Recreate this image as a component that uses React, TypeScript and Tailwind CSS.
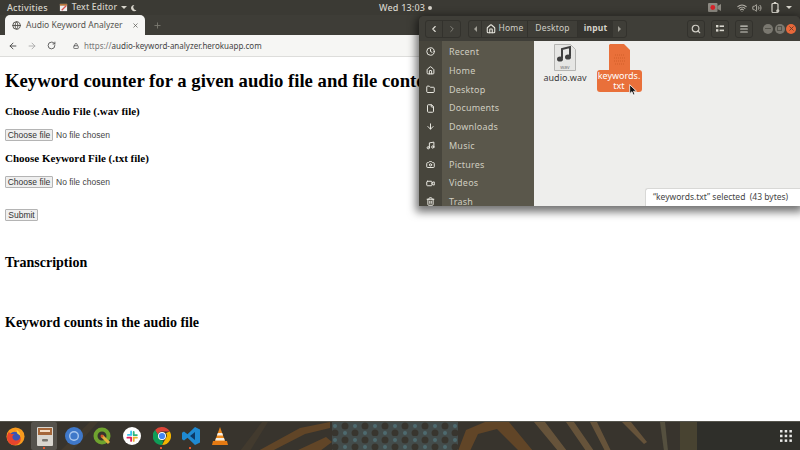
import { ChevronLeft, ChevronRight, Search, Menu, ArrowLeft, ArrowRight, RotateCw, Lock, X, Plus, Globe, Home, Clock, Folder, File, ArrowDown, Music, Camera, Video, Trash2, Wifi, Volume2 } from 'lucide-react';

const ui = "font-['Noto_Sans',sans-serif]";
const serif = "font-['Liberation_Serif',serif]";
const arial = "font-['Liberation_Sans',sans-serif]";

const places = [
    { label: 'Recent', icon: Clock },
    { label: 'Home', icon: Home },
    { label: 'Desktop', icon: Folder },
    { label: 'Documents', icon: File },
    { label: 'Downloads', icon: ArrowDown },
    { label: 'Music', icon: Music },
    { label: 'Pictures', icon: Camera },
    { label: 'Videos', icon: Video },
    { label: 'Trash', icon: Trash2 },
];

function FileButton() {
    return (
        <div className={`flex items-center h-[12px] ${arial}`}>
            <button className="h-[12px] w-[48px] bg-[#efefef] border border-[#b4b4b4] rounded-[1px] text-[8.5px] leading-none text-[#333]">Choose file</button>
            <span className="ml-[3px] text-[8.5px] text-[#444]">No file chosen</span>
        </div>
    );
}

function TopBar() {
    return (
        <div className={`h-[15px] bg-[#3b3a34] text-[#d6d3ca] text-[9px] flex items-center relative ${ui}`}>
            <span className="ml-[7px] font-medium tracking-[0.2px]">Activities</span>
            <svg className="ml-[11px]" width="9" height="9" viewBox="0 0 10 10">
                <rect x="1" y="1" width="8" height="8" fill="#eee" />
                <rect x="1" y="1" width="8" height="2" fill="#b5763c" />
                <path d="M3 8 8 3" stroke="#d9534f" strokeWidth="1.4" />
            </svg>
            <span className="ml-[4px] font-medium text-[8.5px] tracking-[0.2px]">Text Editor</span>
            <div className="ml-[4px] w-0 h-0 border-x-[3px] border-x-transparent border-t-[3px] border-t-[#d6d3ca]" />
            <svg className="ml-[3px]" width="7" height="8" viewBox="0 0 8 8">
                <path d="M5 .5a3.600 3.600 0 1 0 2.500 6A3.400 3.400 0 0 1 5 .5Z" fill="#d6d3ca" />
            </svg>
            <div className="absolute left-[379px] top-0 h-[15px] flex items-center gap-[3px]">
                <span className="font-medium tracking-[0.2px]">Wed 13:03</span>
                <div className="w-[4px] h-[4px] rounded-full bg-[#d6d3ca]" />
            </div>
            <div className="ml-auto flex items-center mr-[8px]">
                <svg width="13" height="9" viewBox="0 0 13 9">
                    <rect x="0" y="0" width="9.500" height="9" rx="1" fill="#8d8a82" />
                    <circle cx="4.800" cy="4.500" r="2.400" fill="#d8232a" />
                    <path d="M9.500 3 13 1v7L9.500 6Z" fill="#8d8a82" />
                </svg>
                <Wifi className="ml-[16px] text-[#b5b2a9]" size={10} strokeWidth={2.6} />
                <Volume2 className="ml-[5px] text-[#b5b2a9]" size={10} strokeWidth={2.4} />
                <svg className="ml-[9px]" width="9" height="11" viewBox="0 0 9 11">
                    <rect x="1" y="1.500" width="6" height="9" rx="1" fill="none" stroke="#d6d3ca" strokeWidth="1.200" />
                    <rect x="2.800" y="0" width="2.400" height="1.500" fill="#d6d3ca" />
                    <circle cx="6.800" cy="8.800" r="1.600" fill="#d6d3ca" />
                </svg>
                <div className="ml-[6px] w-0 h-0 border-x-[3px] border-x-transparent border-t-[3px] border-t-[#d6d3ca]" />
            </div>
        </div>
    );
}

function BrowserChrome() {
    return (
        <>
            <div className={`h-[20px] bg-[#3e3d37] flex items-end pl-[5px] ${ui}`}>
                <div className="w-[140px] h-[20px] bg-[#f6f6f4] rounded-t-[5px] flex items-center pl-[7px] pr-[6px] text-[#55544f]">
                    <Globe size={9} strokeWidth={2.6} className="text-[#55544f]" />
                    <span className="ml-[5px] text-[8.5px]">Audio Keyword Analyzer</span>
                    <X className="ml-auto" size={7} strokeWidth={2.4} />
                </div>
                <Plus className="ml-[8px] mb-[5px] text-[#7a7970]" size={9} strokeWidth={2.4} />
            </div>
            <div className={`h-[22px] bg-[#f6f6f4] border-b border-[#dddddb] flex items-center pl-[8px] ${ui}`}>
                <ArrowLeft size={10} strokeWidth={2.2} className="text-[#444]" />
                <ArrowRight size={10} strokeWidth={2.2} className="ml-[9px] text-[#aaa]" />
                <RotateCw size={9} strokeWidth={2.4} className="ml-[10px] text-[#555]" />
                <Lock size={6} strokeWidth={3} className="ml-[17px] text-[#555]" />
                <span className="ml-[5px] text-[8px] text-[#444]">
                    <span className="text-[#777]">https://</span>audio-keyword-analyzer.herokuapp.com
                </span>
            </div>
        </>
    );
}

function PageBody() {
    return (
        <div className={`flex-1 bg-white pl-[5px] text-black overflow-hidden ${serif}`}>
            <h1 className="mt-[12px] h-[24px] text-[18.72px] leading-[24px] font-bold whitespace-nowrap">Keyword counter for a given audio file and file contents</h1>
            <h3 className="mt-[11px] h-[14px] text-[11px] leading-[14px] font-bold">Choose Audio File (.wav file)</h3>
            <div className="mt-[11px]"><FileButton /></div>
            <h3 className="mt-[10px] h-[14px] text-[11px] leading-[14px] font-bold">Choose Keyword File (.txt file)</h3>
            <div className="mt-[11px]"><FileButton /></div>
            <button className={`block mt-[21px] h-[12px] w-[33px] bg-[#efefef] border border-[#b4b4b4] rounded-[1px] text-[8.5px] leading-none text-[#333] ${arial}`}>Submit</button>
            <h2 className="mt-[33px] h-[18px] text-[14px] leading-[18px] font-bold">Transcription</h2>
            <h2 className="mt-[42px] h-[18px] text-[14px] leading-[18px] font-bold">Keyword counts in the audio file</h2>
        </div>
    );
}

function FileWindow() {
    return (
        <div className={`absolute left-[419px] top-[16px] w-[381px] h-[190px] flex flex-col rounded-t-[5px] overflow-hidden shadow-[0_3px_8px_3px_rgba(0,0,0,0.55)] ${ui}`}>
            <div className="h-[25px] bg-[#3f3e38] flex items-center text-[#d0cec6] text-[8.5px] tracking-[0.2px]">
                <div className="ml-[6px] h-[18px] w-[36px] flex border border-[#33322d] rounded-[3px]">
                    <div className="w-[17px] flex items-center justify-center border-r border-[#33322d] text-[#e0ded6]"><ChevronLeft size={10} strokeWidth={2.6} /></div>
                    <div className="flex-1 flex items-center justify-center text-[#85837b]"><ChevronRight size={10} strokeWidth={2.4} /></div>
                </div>
                <div className="ml-[7px] h-[18px] flex border border-[#33322d] rounded-[3px]">
                    <div className="w-[13px] flex items-center justify-center border-r border-[#33322d]">
                        <div className="w-0 h-0 border-y-[3px] border-y-transparent border-r-[3px] border-r-[#a09e95]" />
                    </div>
                    <div className="w-[46px] flex items-center justify-center gap-[3px] border-r border-[#33322d]"><Home size={10} strokeWidth={2.6} className="text-[#e8e6de]" /><span>Home</span></div>
                    <div className="w-[50px] flex items-center justify-center border-r border-[#33322d]">Desktop</div>
                    <div className="w-[35px] flex items-center justify-center bg-[#35342f] font-bold text-[#d5d3cb]">input</div>
                    <div className="w-[13px] flex items-center justify-center">
                        <div className="w-0 h-0 border-y-[3px] border-y-transparent border-l-[3px] border-l-[#a09e95]" />
                    </div>
                </div>
                <div className="ml-[60px] h-[18px] w-[18px] flex items-center justify-center border border-[#33322d] rounded-[3px]"><Search size={10} strokeWidth={2.8} /></div>
                <div className="ml-[6px] h-[18px] w-[18px] flex items-center justify-center border border-[#33322d] rounded-[3px]">
                    <svg width="8" height="7" viewBox="0 0 8 7" fill="#d8d6ce">
                        <rect x="0" y="0" width="2.400" height="2.400" />
                        <rect x="3.600" y="0.400" width="4.400" height="1.600" />
                        <rect x="0" y="4.200" width="2.400" height="2.400" />
                        <rect x="3.600" y="4.600" width="4.400" height="1.600" />
                    </svg>
                </div>
                <div className="ml-[6px] h-[18px] w-[18px] flex items-center justify-center border border-[#33322d] rounded-[3px]"><Menu size={10} strokeWidth={2.6} /></div>
                <div className="ml-[10px] flex gap-[1.5px]">
                    <div className="w-[10px] h-[10px] rounded-full bg-[#7a7870] flex items-center justify-center"><div className="w-[6px] h-[1px] bg-[#55544c]" /></div>
                    <div className="w-[10px] h-[10px] rounded-full bg-[#7a7870] flex items-center justify-center"><div className="w-[5px] h-[5px] border border-[#55544c]" /></div>
                    <div className="w-[10px] h-[10px] rounded-full bg-[#e9683a] flex items-center justify-center"><X size={7} strokeWidth={3} className="text-[#5a3a2c]" /></div>
                </div>
            </div>
            <div className="flex-1 flex min-h-0">
                <div className="w-[115px] bg-[#5a574b] flex overflow-hidden">
                    <div className="w-[23px] bg-[#47453c] shrink-0" />
                    <div className="flex-1 relative">
                        <div className="-ml-[23px] pt-[1.5px]">
                            {places.map(({ label, icon: Icon }) => (
                                <div key={label} className="h-[18.75px] flex items-center text-[#cfcdc0] text-[9px] tracking-[0.2px]">
                                    <Icon size={9} strokeWidth={2.6} className="ml-[7px] text-[#ecebe4]" />
                                    <span className="ml-[14px]">{label}</span>
                                </div>
                            ))}
                        </div>
                    </div>
                </div>
                <div className="flex-1 bg-[#eeeeec] relative flex items-start pl-[10px] pt-[3px]">
                    <div className="w-[42px] flex flex-col items-center">
                        <svg width="22" height="27" viewBox="0 0 22 27">
                            <path d="M.5.5h16l5 5v21H.5Z" fill="#e6e6e4" stroke="#b5b5b3" />
                            <path d="M8 14V5l8-2v9" fill="none" stroke="#3f3f3f" strokeWidth="2" />
                            <ellipse cx="6" cy="15" rx="3" ry="2.600" fill="#3f3f3f" />
                            <ellipse cx="14" cy="13" rx="3" ry="2.600" fill="#3f3f3f" />
                            <text x="11" y="24.500" textAnchor="middle" fontSize="5" fill="#777" fontFamily="Noto Sans, sans-serif">wav</text>
                        </svg>
                        <span className="text-[#3c3c3c] text-[9px] leading-[11px] mt-[1px]">audio.wav</span>
                    </div>
                    <div className="ml-[10px] flex flex-col items-center w-[46px]">
                        <svg width="21" height="27" viewBox="0 0 21 27" className="-mb-[1px]">
                            <path d="M1 0h14l6 6v21H0V1Z" fill="#e9703a" />
                            <path d="M6 11h9M5 14h11M5 17h11M6 20h9" stroke="#d9642f" strokeWidth="1.500" strokeDasharray="1 1" />
                        </svg>
                        <div className="w-[45px] h-[22px] bg-[#e9703a] rounded-[3px] text-white text-[9px] leading-[10px] text-center pt-[1px]">keywords.<br />txt</div>
                    </div>
                    <svg className="absolute left-[95px] top-[43px]" width="8" height="12" viewBox="0 0 8 12">
                        <path d="M.7.7v9l2.200-2 1.500 3.400 1.600-.7-1.500-3.200h3Z" fill="#111" stroke="#fff" strokeWidth="0.800" />
                    </svg>
                    <div className="absolute right-0 bottom-0 w-[155px] h-[18px] bg-white rounded-tl-[3px] border-l border-t border-[#d8d8d6] flex items-center pl-[7px] text-[8.5px] text-[#444]">“keywords.txt” selected&nbsp;&nbsp;(43 bytes)</div>
                </div>
            </div>
        </div>
    );
}

function Wallpaper() {
    return (
        <svg className="absolute left-0 top-0" width="697" height="29" viewBox="0 0 697 29">
            <defs>
                <pattern id="lattice" width="20" height="14" patternUnits="userSpaceOnUse">
                    <rect width="20" height="14" fill="#434c4b" />
                    <circle cx="5" cy="4" r="3.500" fill="#38352e" />
                    <circle cx="15" cy="11" r="3.500" fill="#38352e" />
                    <circle cx="15" cy="4" r="2" fill="#4d6a6f" />
                    <circle cx="5" cy="11" r="2" fill="#4d6a6f" />
                </pattern>
            </defs>
            <rect width="697" height="29" fill="#38342d" />
            <path d="M60 29 90 0h8L72 29Z M240 29 262 0h6L250 29Z" fill="#423a2e" />
            <path d="M258 29 300 6 330 0v6L305 12 272 29Z M296 29l30-14 6 5-12 9Z" fill="#614527" />
            <rect x="332" width="126" height="29" fill="url(#lattice)" />
            <path d="M458 29 466 8 485 0h24l24 29h-14L497 7 478 12 470 29Z" fill="#614527" />
            <path d="M534 0l24 29h9L545 0Z M566 0l20 29h8L574 0Z M590 0l15 29h6L597 0Z M622 0l22 22 3-2L631 0Z" fill="#66533a" />
            <path d="M660 0l4 29h4L665 0Z" fill="#55503f" />
            <rect x="680" width="17" height="29" fill="#484331" />
        </svg>
    );
}

function Dock() {
    return (
        <div className="h-[29px] bg-[#2f2f2a] relative flex items-center border-t border-[#55544c] overflow-hidden">
            <Wallpaper />
            <div className="relative flex items-center h-full">
                <div className="absolute left-[31px] top-0 w-[26px] h-full bg-white/15 rounded-[2px]" />
                <div className="absolute left-[43px] bottom-[1px] w-[2px] h-[2px] bg-[#e9572b]" />
                <div className="absolute left-[160px] bottom-[1px] w-[2px] h-[2px] bg-[#e9572b]" />
                <div className="absolute left-[189px] bottom-[1px] w-[2px] h-[2px] bg-[#e9572b]" />
                <div className="w-[30px] flex justify-center">
                    <svg width="19" height="19" viewBox="0 0 20 20">
                        <circle cx="10" cy="10" r="9.500" fill="#f89a1e" />
                        <circle cx="9" cy="11" r="6" fill="#3a55b5" />
                        <path d="M3 5c2 3 4 2 6 3-3 1-3 4 0 6 3 1 6-1 6-4 2 5-2 9-6 9-5 0-8-4-8-8 0-2 1-4 2-6Z" fill="#e8452c" />
                        <path d="M11 3c2 1 4 3 4 6l-3-2Z" fill="#ffcf3a" />
                    </svg>
                </div>
                <div className="w-[29px] flex justify-center relative">
                    <svg width="18" height="19" viewBox="0 0 18 19">
                        <rect x="1" y="0" width="16" height="19" rx="1" fill="#d9d6cf" />
                        <rect x="2" y="1" width="14" height="7" fill="#a5673a" />
                        <rect x="4" y="3" width="10" height="2" fill="#f3dcc4" />
                        <rect x="6" y="12" width="6" height="2.500" rx="1" fill="#77756e" />
                    </svg>
                </div>
                <div className="w-[29px] flex justify-center">
                    <svg width="18" height="18" viewBox="0 0 18 18">
                        <circle cx="9" cy="9" r="9" fill="#3f78c9" />
                        <circle cx="9" cy="9" r="5" fill="#a9c7ee" />
                        <circle cx="9" cy="9" r="3.600" fill="#3f78c9" />
                    </svg>
                </div>
                <div className="w-[29px] flex justify-center">
                    <svg width="19" height="19" viewBox="0 0 19 19">
                        <circle cx="9" cy="9" r="6.500" fill="none" stroke="#6fa32f" strokeWidth="4" />
                        <path d="M9 9l7 7" stroke="#e2b13c" strokeWidth="3" />
                        <circle cx="9" cy="9" r="1.500" fill="#d8552a" />
                    </svg>
                </div>
                <div className="w-[30px] flex justify-center">
                    <svg width="18" height="18" viewBox="0 0 18 18">
                        <circle cx="9" cy="9" r="9" fill="#fff" />
                        <rect x="4" y="7" width="5" height="1.800" rx=".9" fill="#36c5f0" />
                        <rect x="7.200" y="3.500" width="1.800" height="5" rx=".9" fill="#36c5f0" />
                        <rect x="9.800" y="4" width="1.800" height="5" rx=".9" fill="#2eb67d" />
                        <rect x="9.800" y="7.200" width="5" height="1.800" rx=".9" fill="#2eb67d" />
                        <rect x="9.800" y="9.800" width="5" height="1.800" rx=".9" fill="#ecb22e" />
                        <rect x="9.800" y="9.800" width="1.800" height="5" rx=".9" fill="#ecb22e" />
                        <rect x="3.500" y="9.800" width="5" height="1.800" rx=".9" fill="#e01e5a" />
                        <rect x="7.200" y="9.800" width="1.800" height="5" rx=".9" fill="#e01e5a" />
                    </svg>
                </div>
                <div className="w-[29px] flex justify-center">
                    <svg width="18" height="18" viewBox="0 0 36 36">
                        <path d="M18 0a18 18 0 0 1 15.600 9H18a9 9 0 0 0-8.500 6L4.200 5.800A18 18 0 0 1 18 0Z" fill="#db4437" />
                        <path d="M33.600 9A18 18 0 0 1 18 36l7.800-13.500A9 9 0 0 0 26 12Z" fill="#f4b400" />
                        <path d="M18 36A18 18 0 0 1 4.200 5.800L12 19a9 9 0 0 0 9 8Z" fill="#0f9d58" />
                        <circle cx="18" cy="18" r="8" fill="#fff" />
                        <circle cx="18" cy="18" r="6.200" fill="#4285f4" />
                    </svg>
                </div>
                <div className="w-[29px] flex justify-center">
                    <svg width="18" height="18" viewBox="0 0 18 18">
                        <path d="M13 0 18 2.500v13L13 18 5.500 10.800 2 13.500 0 12.300V5.700L2 4.500l3.500 2.700Z" fill="#1f8ad2" />
                        <path d="M13 5 8 9l5 4Z" fill="#0d3a66" />
                    </svg>
                </div>
                <div className="w-[29px] flex justify-center">
                    <svg width="16" height="19" viewBox="0 0 16 19">
                        <path d="M8 0 13 14H3Z" fill="#f08a1d" />
                        <path d="M5.800 6h4.400l.9 2.500H4.900ZM4 11h8l.8 2.500H3.200Z" fill="#f5f1e8" />
                        <path d="M1 14h14l1 4H0Z" fill="#e57a12" />
                    </svg>
                </div>
            </div>
            <svg className="absolute left-[780px] top-[8px]" width="12" height="12" viewBox="0 0 12 12" fill="#e8e8e6">
                <rect x="0" y="0" width="2.500" height="2.500" /><rect x="4.700" y="0" width="2.500" height="2.500" /><rect x="9.400" y="0" width="2.500" height="2.500" />
                <rect x="0" y="4.700" width="2.500" height="2.500" /><rect x="4.700" y="4.700" width="2.500" height="2.500" /><rect x="9.400" y="4.700" width="2.500" height="2.500" />
                <rect x="0" y="9.400" width="2.500" height="2.500" /><rect x="4.700" y="9.400" width="2.500" height="2.500" /><rect x="9.400" y="9.400" width="2.500" height="2.500" />
            </svg>
        </div>
    );
}

export default function App() {
    return (
        <div className="relative w-[800px] h-[450px] overflow-hidden flex flex-col">
            <TopBar />
            <BrowserChrome />
            <PageBody />
            <Dock />
            <FileWindow />
        </div>
    );
}
